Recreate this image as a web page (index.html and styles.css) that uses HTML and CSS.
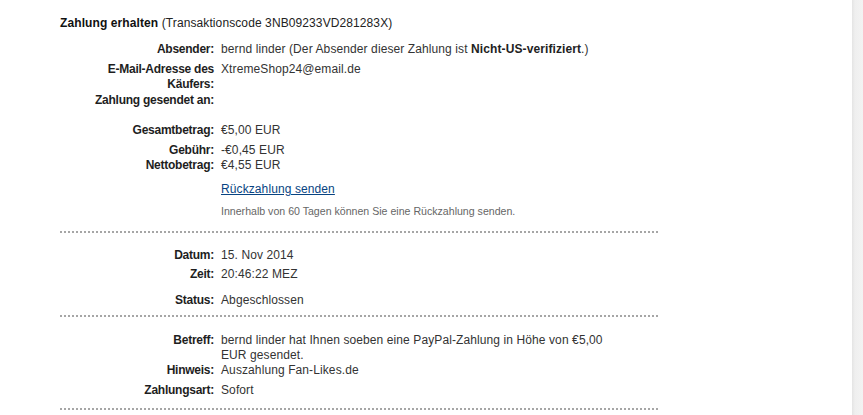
FILE: index.html
```html
<!DOCTYPE html>
<html lang="de">
<head>
<meta charset="utf-8">
<title>Zahlung erhalten</title>
<link rel="stylesheet" href="styles.css">
</head>
<body>
<div class="page">
  <main class="content">
    <h1 class="title"><b>Zahlung erhalten</b> (Transaktionscode 3NB09233VD281283X)</h1>

    <section class="block">
      <div class="row r-absender"><span class="label">Absender:</span><span class="value">bernd linder (Der Absender dieser Zahlung ist <b>Nicht-US-verifiziert</b>.)</span></div>
      <div class="row r-email"><span class="label">E-Mail-Adresse des Käufers:</span><span class="value">XtremeShop24@email.de</span></div>
      <div class="row r-an"><span class="label">Zahlung gesendet an:</span><span class="value"></span></div>
      <div class="row r-gesamt"><span class="label">Gesamtbetrag:</span><span class="value">€5,00 EUR</span></div>
      <div class="row r-gebuehr"><span class="label">Gebühr:</span><span class="value">-€0,45 EUR</span></div>
      <div class="row r-netto"><span class="label">Nettobetrag:</span><span class="value">€4,55 EUR</span></div>
      <div class="row r-link"><span class="label"></span><span class="value"><a href="#" class="link">Rückzahlung senden</a></span></div>
      <div class="row r-note"><span class="label"></span><span class="value note">Innerhalb von 60 Tagen können Sie eine Rückzahlung senden.</span></div>
    </section>
    <div class="dots d1"></div>

    <section class="block">
      <div class="row r-datum"><span class="label">Datum:</span><span class="value">15. Nov 2014</span></div>
      <div class="row r-zeit"><span class="label">Zeit:</span><span class="value">20:46:22 MEZ</span></div>
      <div class="row r-status"><span class="label">Status:</span><span class="value">Abgeschlossen</span></div>
    </section>
    <div class="dots d2"></div>

    <section class="block">
      <div class="row r-betreff"><span class="label">Betreff:</span><span class="value">bernd linder hat Ihnen soeben eine PayPal-Zahlung in Höhe von €5,00 EUR gesendet.</span></div>
      <div class="row r-hinweis"><span class="label">Hinweis:</span><span class="value">Auszahlung Fan-Likes.de</span></div>
      <div class="row r-art"><span class="label">Zahlungsart:</span><span class="value">Sofort</span></div>
    </section>
    <div class="dots d3"></div>
  </main>
  <aside class="edge"></aside>
</div>
</body>
</html>
```

FILE: styles.css
```css
html, body {
  margin: 0;
  padding: 0;
  background: #fff;
}
body {
  font-family: "Liberation Sans", Arial, sans-serif;
  font-size: 12px;
  line-height: 15px;
  letter-spacing: 0.1px;
  color: #333;
}
.page {
  display: flex;
  height: 415px;
  overflow: hidden;
}
.content {
  flex: 1;
  padding-left: 60px;
}
.edge {
  width: 11px;
  background: linear-gradient(to right, #e4e4e4 0, #efefef 3px, #f3f3f3 100%);
}
.title {
  margin: 16px 0 0 0;
  font-size: 12px;
  line-height: 15px;
  font-weight: normal;
  color: #222;
}
.title b { color: #111; }
.row {
  display: grid;
  grid-template-columns: 154px 395px;
  column-gap: 7px;
}
.label {
  text-align: right;
  font-weight: bold;
  color: #1e1e1e;
  letter-spacing: -0.25px;
}
.value b { color: #222; }
.r-absender { margin-top: 11px; }
.r-email { margin-top: 5px; }
.r-an { margin-top: 1px; }
.r-gesamt { margin-top: 15px; }
.r-gebuehr { margin-top: 5px; }
.r-netto { margin-top: 0; }
.r-link { margin-top: 9px; }
.r-note { margin-top: 7px; }
.link {
  color: #084482;
  text-decoration: underline;
}
.note {
  font-size: 10.6px;
  letter-spacing: 0;
  color: #666;
}
.dots {
  width: 600px;
  height: 2px;
  background: repeating-linear-gradient(to right, #a6a6a6 0 2px, transparent 2px 4px);
}
.d1 { margin-top: 12px; }
.r-datum { margin-top: 15px; }
.r-zeit { margin-top: 4px; }
.r-status { margin-top: 11px; }
.d2 { margin-top: 7px; }
.r-betreff { margin-top: 16px; }
.r-hinweis { margin-top: 0; }
.r-art { margin-top: 5px; }
.d3 { margin-top: 10px; }
```
